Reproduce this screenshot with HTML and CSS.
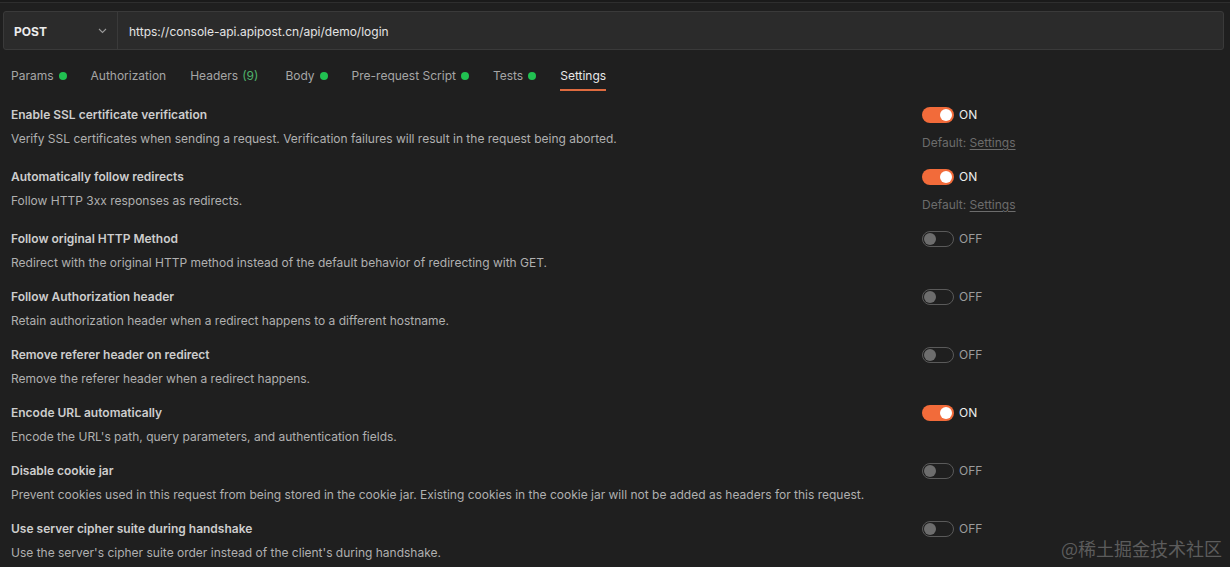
FILE: index.html
```html
<!DOCTYPE html>
<html>
<head>
<meta charset="utf-8">
<link rel="stylesheet" href="styles.css">
</head>
<body>
<div class="topstrip"></div>
<div class="reqbar">
  <div class="method">
    <span class="method-name">POST</span>
    <svg class="chev" width="9" height="6" viewBox="0 0 9 6"><path d="M1 1 L4.5 4.5 L8 1" fill="none" stroke="#9a9a9a" stroke-width="1.1"/></svg>
  </div>
  <div class="url">https://console-api.apipost.cn/api/demo/login</div>
</div>
<div class="tabs">
  <div class="tab">Params <span class="dot"></span></div>
  <div class="tab">Authorization</div>
  <div class="tab">Headers <span class="count">(9)</span></div>
  <div class="tab">Body <span class="dot"></span></div>
  <div class="tab">Pre-request Script <span class="dot"></span></div>
  <div class="tab">Tests <span class="dot"></span></div>
  <div class="tab active">Settings</div>
</div>
<div class="settings">
  <div class="row">
    <div class="info">
      <div class="title">Enable SSL certificate verification</div>
      <div class="desc">Verify SSL certificates when sending a request. Verification failures will result in the request being aborted.</div>
    </div>
    <div class="ctrl">
      <div class="switch-line"><span class="switch on"><span class="knob"></span></span><span class="state on">ON</span></div>
      <div class="default">Default: <span class="link">Settings</span></div>
    </div>
  </div>
  <div class="row">
    <div class="info">
      <div class="title">Automatically follow redirects</div>
      <div class="desc">Follow HTTP 3xx responses as redirects.</div>
    </div>
    <div class="ctrl">
      <div class="switch-line"><span class="switch on"><span class="knob"></span></span><span class="state on">ON</span></div>
      <div class="default">Default: <span class="link">Settings</span></div>
    </div>
  </div>
  <div class="row">
    <div class="info">
      <div class="title">Follow original HTTP Method</div>
      <div class="desc">Redirect with the original HTTP method instead of the default behavior of redirecting with GET.</div>
    </div>
    <div class="ctrl">
      <div class="switch-line"><span class="switch off"><span class="knob"></span></span><span class="state off">OFF</span></div>
    </div>
  </div>
  <div class="row">
    <div class="info">
      <div class="title">Follow Authorization header</div>
      <div class="desc">Retain authorization header when a redirect happens to a different hostname.</div>
    </div>
    <div class="ctrl">
      <div class="switch-line"><span class="switch off"><span class="knob"></span></span><span class="state off">OFF</span></div>
    </div>
  </div>
  <div class="row">
    <div class="info">
      <div class="title">Remove referer header on redirect</div>
      <div class="desc">Remove the referer header when a redirect happens.</div>
    </div>
    <div class="ctrl">
      <div class="switch-line"><span class="switch off"><span class="knob"></span></span><span class="state off">OFF</span></div>
    </div>
  </div>
  <div class="row">
    <div class="info">
      <div class="title">Encode URL automatically</div>
      <div class="desc">Encode the URL's path, query parameters, and authentication fields.</div>
    </div>
    <div class="ctrl">
      <div class="switch-line"><span class="switch on"><span class="knob"></span></span><span class="state on">ON</span></div>
    </div>
  </div>
  <div class="row">
    <div class="info">
      <div class="title">Disable cookie jar</div>
      <div class="desc">Prevent cookies used in this request from being stored in the cookie jar. Existing cookies in the cookie jar will not be added as headers for this request.</div>
    </div>
    <div class="ctrl">
      <div class="switch-line"><span class="switch off"><span class="knob"></span></span><span class="state off">OFF</span></div>
    </div>
  </div>
  <div class="row">
    <div class="info">
      <div class="title">Use server cipher suite during handshake</div>
      <div class="desc">Use the server's cipher suite order instead of the client's during handshake.</div>
    </div>
    <div class="ctrl">
      <div class="switch-line"><span class="switch off"><span class="knob"></span></span><span class="state off">OFF</span></div>
    </div>
  </div>
</div>
<div class="watermark">@稀土掘金技术社区</div>
</body>
</html>
```
FILE: styles.css
```css
html, body {
  margin: 0;
  padding: 0;
  background: #1f1f1f;
  height: 100%;
  overflow: hidden;
}
body {
  font-family: Inter, "Noto Sans", sans-serif;
  color: #c8c8c8;
  position: relative;
}
.topstrip {
  height: 2px;
  background: #1a1a1a;
  border-bottom: 1px solid #2e2e2e;
  margin-bottom: 8px;
}
.reqbar {
  margin: 0 6px 0 3px;
  height: 37px;
  display: flex;
  background: #2b2b2b;
  border: 1px solid #3a3a3a;
  border-radius: 3px;
}
.method {
  width: 103px;
  padding-left: 10px;
  display: flex;
  align-items: center;
  border-right: 1px solid #3a3a3a;
}
.method-name {
  font-size: 12px;
  font-weight: 700;
  color: #ececec;
  flex: 1;
  padding-top: 1px;
}
.chev {
  margin-right: 10px;
}
.url {
  display: flex;
  align-items: center;
  padding-left: 11px;
  padding-top: 1px;
  font-size: 12px;
  color: #e4e4e4;
}
.tabs {
  display: flex;
  gap: 24px;
  padding-left: 11px;
}
.tab {
  padding-top: 18px;
  padding-bottom: 5px;
  line-height: 16px;
  font-size: 12px;
  color: #a6a6a6;
  border-bottom: 2px solid transparent;
  display: flex;
  align-items: center;
  gap: 5px;
  white-space: nowrap;
}
.tab.active {
  color: #e8e8e8;
  border-bottom-color: #df6b3f;
}
.dot {
  width: 8px;
  height: 8px;
  border-radius: 50%;
  background: #21c151;
  display: inline-block;
}
.count {
  color: #4fb36b;
  margin-left: -1px;
  margin-right: 3px;
}
.settings {
  padding: 16px 0 0 11px;
}
.row {
  display: grid;
  grid-template-columns: 911px auto;
  align-items: start;
  padding-bottom: 18px;
}
.title {
  font-size: 12px;
  font-weight: 600;
  line-height: 16px;
  color: #cdcdcd;
}
.desc {
  margin-top: 8px;
  font-size: 12px;
  line-height: 16px;
  color: #b0b0b0;
}
.switch-line {
  display: flex;
  align-items: center;
  height: 16px;
}
.switch {
  width: 32px;
  height: 16px;
  border-radius: 8px;
  box-sizing: border-box;
  display: inline-flex;
  align-items: center;
  padding: 0 2px;
}
.switch.on {
  background: #f26b3a;
  justify-content: flex-end;
}
.switch.off {
  border: 1.5px solid #5a5a5a;
  justify-content: flex-start;
  padding: 0 1px;
}
.knob {
  width: 12px;
  height: 12px;
  border-radius: 50%;
}
.switch.on .knob {
  background: #ffffff;
}
.switch.off .knob {
  background: #6d6d6d;
}
.state {
  margin-left: 5px;
  font-size: 12px;
  line-height: 16px;
}
.state.on {
  color: #ececec;
}
.state.off {
  color: #9c9c9c;
}
.default {
  margin-top: 12px;
  font-size: 12px;
  line-height: 16px;
  color: #6c6c6c;
}
.link {
  text-decoration: underline;
  text-underline-offset: 2px;
}
.watermark {
  position: absolute;
  right: 8px;
  bottom: 9px;
  font-family: "Noto Sans CJK SC", sans-serif;
  font-size: 18px;
  color: #5c5c5c;
  line-height: 20px;
}
```
